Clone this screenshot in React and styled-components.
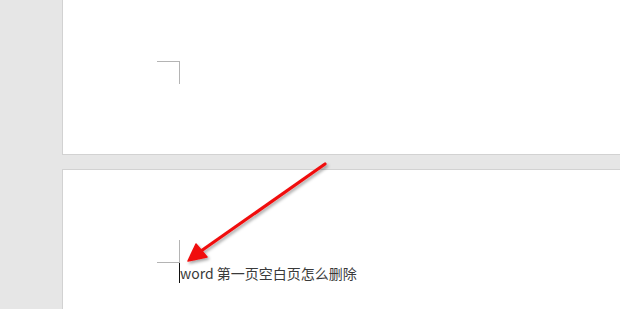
import React from "react";
import styled, { createGlobalStyle } from "styled-components";

const Global = createGlobalStyle`
  html, body { margin: 0; padding: 0; background: #e6e6e6; }
  body { font-family: "Noto Sans CJK SC", "Noto Sans", sans-serif; }
`;

const Canvas = styled.div`
  position: relative;
  width: 620px;
  height: 309px;
  overflow: hidden;
  background: #e6e6e6;
  display: flex;
  flex-direction: column;
  gap: 14px;
  padding-left: 62px;
  box-sizing: border-box;
`;

const Page = styled.div`
  background: #ffffff;
  flex: none;
  height: ${(p) => p.$h}px;
  border-left: 1px solid #d2d2d2;
  border-top: ${(p) => (p.$top ? "1px solid #d2d2d2" : "none")};
  border-bottom: ${(p) => (p.$bottom ? "1px solid #d2d2d2" : "none")};
  box-sizing: border-box;
  padding-left: 94px;
  padding-top: ${(p) => p.$pt}px;
  display: flex;
  flex-direction: column;
`;

const CornerMark = styled.div`
  width: 23px;
  height: 23px;
  box-sizing: border-box;
  border-right: 1px solid #b4b4b4;
  border-top: ${(p) => (p.$flip ? "none" : "1px solid #b4b4b4")};
  border-bottom: ${(p) => (p.$flip ? "1px solid #b4b4b4" : "none")};
`;

const Line = styled.div`
  position: relative;
  display: flex;
  align-items: center;
  height: 21px;
  margin-left: 23px;
  font-size: 14px;
  line-height: 21px;
  color: #3a3a3a;
  white-space: nowrap;
`;

const Caret = styled.span`
  position: absolute;
  left: -1px;
  top: 0;
  width: 1px;
  height: 20px;
  background: #111;
`;

const Arrow = styled.svg`
  position: absolute;
  left: 0;
  top: 0;
  pointer-events: none;
`;

export default function App() {
  return (
    <>
      <Global />
      <Canvas>
        <Page $h={155} $bottom $pt={61}>
          <CornerMark />
        </Page>
        <Page $h={200} $top $pt={70}>
          <CornerMark $flip />
          <Line>
            <Caret />
            word 第一页空白页怎么删除
          </Line>
        </Page>
        <Arrow width="620" height="309" viewBox="0 0 620 309">
          <defs>
            <filter id="sh" x="-20%" y="-20%" width="140%" height="140%">
              <feDropShadow dx="1.5" dy="2" stdDeviation="1.6" floodColor="#000" floodOpacity="0.35" />
            </filter>
          </defs>
          <g filter="url(#sh)">
            <line x1="325" y1="164" x2="201" y2="251" stroke="#f01010" strokeWidth="3.2" strokeLinecap="round" />
            <polygon points="188,261 196,244 207,257" fill="#f01010" stroke="#f01010" strokeWidth="1.5" strokeLinejoin="round" />
          </g>
        </Arrow>
      </Canvas>
    </>
  );
}
